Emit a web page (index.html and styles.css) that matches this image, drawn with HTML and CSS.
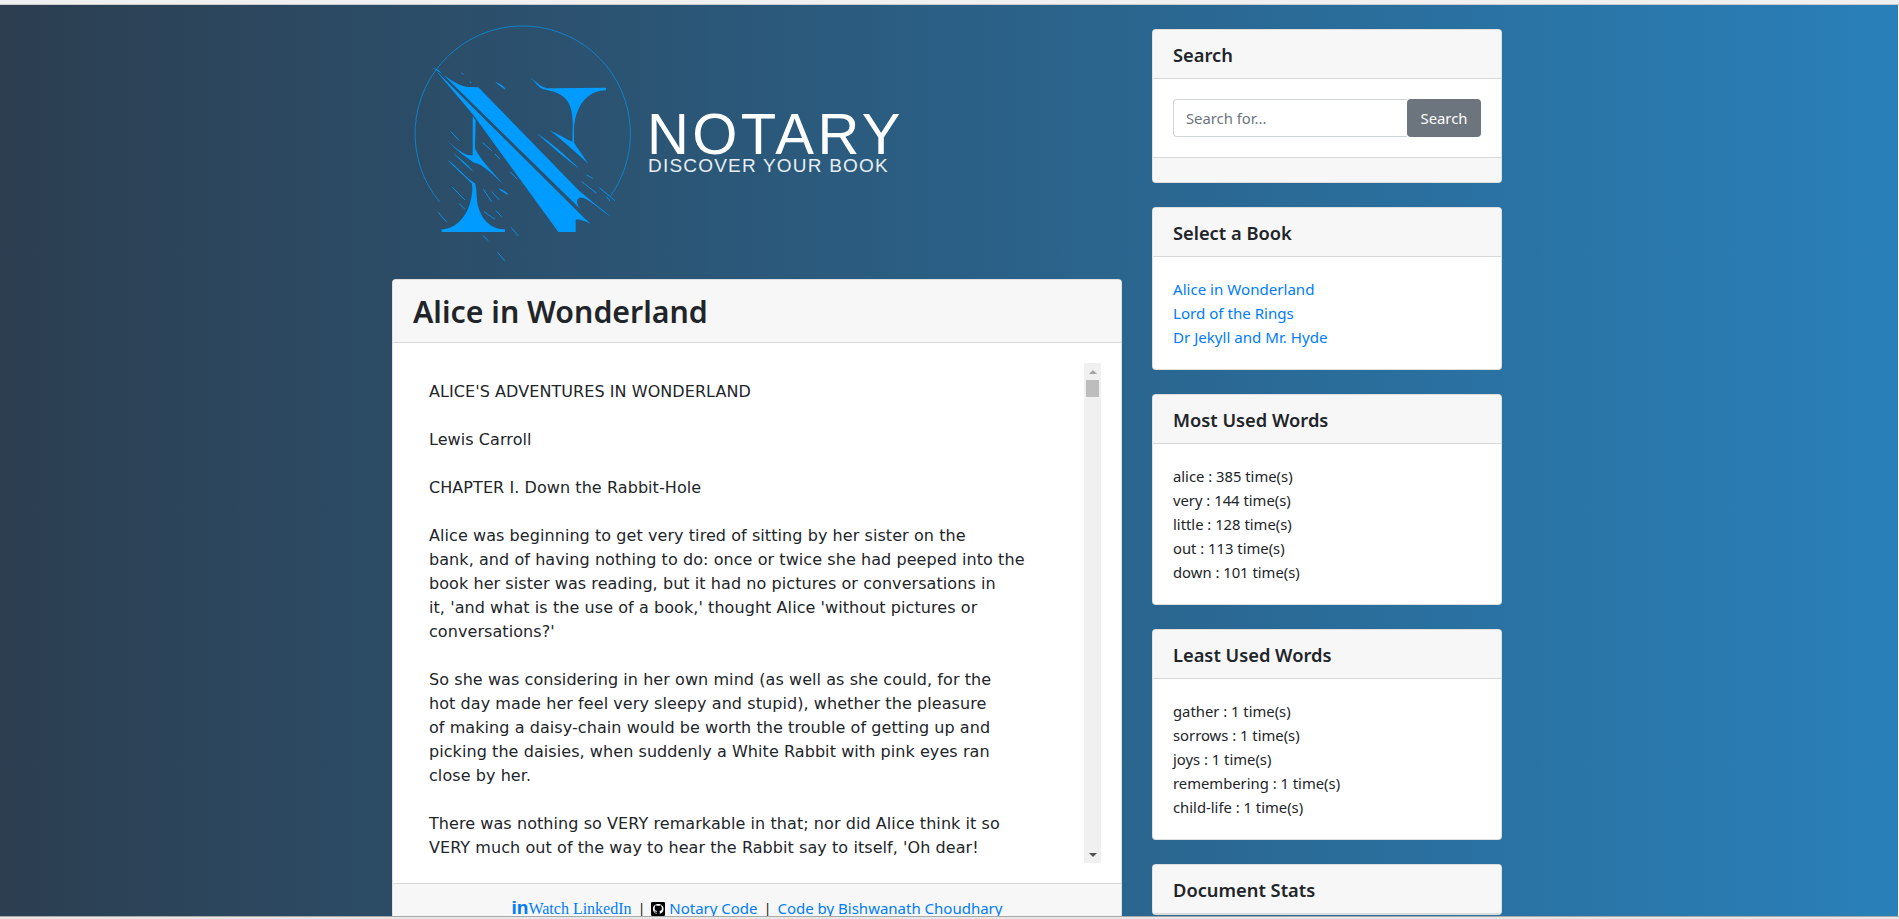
FILE: index.html
```html
<!DOCTYPE html>
<html>
<head>
  <title>Notary</title>
  <link rel="stylesheet" href="styles.css">
</head>
<body>
  <div class="top-strip"></div>

  <div class="page">
    <div class="container">
      <div class="main-col">
        <div class="logo">
          <svg class="logo-mark" viewBox="0 0 720 750" width="240" height="250">
            <path class="logo-ring" d="M88 545 A323 323 0 1 1 600 530"/>
            <path class="logo-fill" d="M66 142 C110 170 140 198 175 201 L205 202 L500 505 C520 525 560 555 605 592 C570 570 530 530 510 533 C498 536 498 550 510 566 L85 150 Z"/>
            <path class="logo-fill" d="M76 150 L525 596 L542 611 C525 605 510 595 497 600 L497 636 L445 636 L190 285 Z"/>
            <path class="logo-fill" d="M360 173 C385 190 395 205 420 205 L588 203 L588 211 C530 212 495 260 492 330 L492 368 L535 431 C510 410 470 370 418 330 C450 345 475 362 487 365 C490 300 490 260 465 235 C450 218 420 212 400 208 C385 203 375 183 360 173 Z"/>
            <path class="logo-fill" d="M380 340 C420 365 470 410 510 448 C470 420 420 375 380 340 Z"/>
            <path class="logo-fill" d="M188 288 L197 302 L195 385 C205 410 240 450 280 492 C245 460 215 430 192 428 C165 410 140 390 115 365 C140 385 165 410 188 405 Z"/>
            <path class="logo-fill" d="M95 628 C130 628 165 600 180 550 C185 530 190 510 185 490 C160 465 130 440 112 418 C140 440 175 480 195 490 C202 510 198 540 205 560 C215 600 245 628 285 628 L285 636 L95 636 Z"/>
            <path class="logo-fill" d="M130 400 C150 415 175 435 190 455 C170 440 150 420 130 400 Z"/>
            <path class="logo-fill" d="M255 185 C270 190 282 198 288 210 C278 202 265 195 255 185 Z"/>
            <path class="logo-fill" d="M265 505 C278 510 290 517 297 525 C285 522 273 514 265 505 Z"/>
            <path class="logo-specks" d="M123 335 L148 362 M127 502 L165 540 M85 577 L110 606 M222 575 L255 598 M245 515 L268 540 M220 508 L245 545 M147 550 L165 568 M258 572 L275 590 M218 368 L245 392 M255 402 L270 418 M303 622 L325 648 M218 646 L235 662 M263 697 L284 722 M300 455 L322 478 M515 485 L560 520 M568 503 L615 542 M530 465 L548 475 M590 530 L600 543 M155 158 L160 164 M180 184 L183 190"/>
          </svg>
          <div class="logo-text">
            <div class="logo-name">NOTARY</div>
            <div class="logo-tag">DISCOVER YOUR BOOK</div>
          </div>
        </div>

        <div class="card">
          <div class="card-header">
            <h1 class="book-title">Alice in Wonderland</h1>
          </div>
          <div class="card-body">
            <div class="book-scroll">
<pre class="book-text">ALICE'S ADVENTURES IN WONDERLAND

Lewis Carroll

CHAPTER I. Down the Rabbit-Hole

Alice was beginning to get very tired of sitting by her sister on the
bank, and of having nothing to do: once or twice she had peeped into the
book her sister was reading, but it had no pictures or conversations in
it, 'and what is the use of a book,' thought Alice 'without pictures or
conversations?'

So she was considering in her own mind (as well as she could, for the
hot day made her feel very sleepy and stupid), whether the pleasure
of making a daisy-chain would be worth the trouble of getting up and
picking the daisies, when suddenly a White Rabbit with pink eyes ran
close by her.

There was nothing so VERY remarkable in that; nor did Alice think it so
VERY much out of the way to hear the Rabbit say to itself, 'Oh dear!</pre>
              <div class="scrollbar">
                <div class="sb-btn"><span class="sb-up"></span></div>
                <div class="sb-track"><div class="sb-thumb"></div></div>
                <div class="sb-btn"><span class="sb-down"></span></div>
              </div>
            </div>
          </div>
          <div class="card-footer main-footer">
            <a class="in-link" href="#"><span class="in-mark">in</span>Watch LinkedIn</a>
            <span class="sep">|</span>
            <svg class="gh-icon" viewBox="0 0 16 16" width="14" height="14">
              <rect width="16" height="16" rx="1.5" fill="#000"/>
              <path fill="#fff" d="M8 2.2C4.8 2.2 2.2 4.8 2.2 8c0 2.6 1.7 4.7 4 5.5.3 0 .4-.1.4-.3v-1c-1.6.3-2-.4-2.1-.8-.1-.2-.4-.8-.7-.9-.2-.1-.5-.4 0-.4.5 0 .8.4.9.6.6 1 1.5.7 1.9.5 0-.4.2-.7.4-.9-1.4-.2-2.9-.7-2.9-3.200 0-.7.3-1.300.7-1.700-.1-.2-.3-.8.1-1.700 0 0 .5-.2 1.800.7.5-.1 1.100-.2 1.600-.2s1.100.1 1.600.2c1.200-.8 1.800-.7 1.800-.7.4.9.1 1.500.1 1.700.4.4.7 1 .7 1.700 0 2.500-1.500 3-2.900 3.200.2.2.4.6.4 1.200v1.700c0 .2.1.3.4.3 2.300-.8 4-2.900 4-5.500 0-3.200-2.600-5.800-5.800-5.800z"/>
            </svg>
            <a class="foot-link" href="#">Notary Code</a>
            <span class="sep">|</span>
            <a class="foot-link" href="#">Code by Bishwanath Choudhary</a>
          </div>
        </div>
      </div>

      <div class="side-col">
        <div class="card">
          <div class="card-header"><h5>Search</h5></div>
          <div class="card-body">
            <div class="search-group">
              <input class="search-input" type="text" placeholder="Search for...">
              <button class="search-btn">Search</button>
            </div>
          </div>
          <div class="card-footer"></div>
        </div>

        <div class="card">
          <div class="card-header"><h5>Select a Book</h5></div>
          <div class="card-body">
            <a class="book-link" href="#">Alice in Wonderland</a>
            <a class="book-link" href="#">Lord of the Rings</a>
            <a class="book-link" href="#">Dr Jekyll and Mr. Hyde</a>
          </div>
        </div>

        <div class="card">
          <div class="card-header"><h5>Most Used Words</h5></div>
          <div class="card-body word-list">
            <div>alice : 385 time(s)</div>
            <div>very : 144 time(s)</div>
            <div>little : 128 time(s)</div>
            <div>out : 113 time(s)</div>
            <div>down : 101 time(s)</div>
          </div>
        </div>

        <div class="card">
          <div class="card-header"><h5>Least Used Words</h5></div>
          <div class="card-body word-list">
            <div>gather : 1 time(s)</div>
            <div>sorrows : 1 time(s)</div>
            <div>joys : 1 time(s)</div>
            <div>remembering : 1 time(s)</div>
            <div>child-life : 1 time(s)</div>
          </div>
        </div>

        <div class="card">
          <div class="card-header"><h5>Document Stats</h5></div>
        </div>
      </div>
    </div>
  </div>

  <div class="bottom-strip"></div>
</body>
</html>
```

FILE: styles.css
```css
html, body {
  height: 100%;
  margin: 0;
  overflow: hidden;
}

body {
  display: flex;
  flex-direction: column;
  background: #fff;
  color: #212529;
  font-family: "Noto Sans", sans-serif;
  font-size: 14.8px;
  line-height: 24px;
}

a {
  color: #007bff;
  text-decoration: none;
}

.top-strip {
  height: 4px;
  background: #f0f0f0;
  border-bottom: 1px solid #ccc;
  flex: none;
}

.bottom-strip {
  height: 2px;
  background: #e6e6e6;
  border-top: 1px solid #a9a9a9;
  flex: none;
}

.page {
  flex: 1;
  min-height: 0;
  overflow: hidden;
  margin-right: 1px;
  padding-right: 4px;
  background: linear-gradient(to right, #2c3e50, #2980b9);
}

.container {
  display: grid;
  grid-template-columns: 730px 350px;
  column-gap: 30px;
  width: 1110px;
  margin: 0 auto;
}

.logo {
  display: flex;
  height: 250px;
  padding: 15px 0 9px 18px;
}

.logo-mark {
  flex: none;
}

.logo-ring {
  fill: none;
  stroke: #0f82c6;
  stroke-width: 3;
}

.logo-fill {
  fill: #009bff;
}

.logo-specks {
  fill: none;
  stroke: #0a8fe6;
  stroke-width: 3;
}

.logo-text {
  margin-left: -3px;
  padding-top: 90px;
  color: #fff;
  font-family: "Liberation Sans", sans-serif;
}

.logo-name {
  font-size: 58px;
  line-height: 48px;
  letter-spacing: 3.400px;
}

.logo-tag {
  margin-left: 1px;
  font-size: 19px;
  line-height: 15px;
  letter-spacing: 1.200px;
  color: #e8eef3;
}

.card {
  margin-bottom: 24px;
  background: #fff;
  border: 1px solid rgba(0, 0, 0, .125);
  border-radius: 4px;
  overflow: hidden;
}

.side-col {
  padding-top: 24px;
}

.card-header {
  padding: 12px 20px;
  background: #f7f7f7;
  border-bottom: 1px solid rgba(0, 0, 0, .125);
}

.card-header h5 {
  margin: 0;
  padding-top: 1px;
  font-size: 18.3px;
  font-weight: 600;
  line-height: 23px;
}

.book-title {
  margin: 0;
  padding-top: 1px;
  font-size: 30.3px;
  font-weight: 600;
  line-height: 37px;
}

.card-body {
  padding: 20px;
}

.card-footer {
  padding: 12px 20px;
  min-height: 25px;
  box-sizing: border-box;
  background: #f7f7f7;
  border-top: 1px solid rgba(0, 0, 0, .125);
}

.main-footer {
  text-align: center;
}

.in-link {
  font-family: "Liberation Serif", serif;
  font-size: 16px;
}

.in-mark {
  font-family: "Liberation Sans", sans-serif;
  font-size: 19px;
  font-weight: 700;
}

.foot-link {
  font-size: 15px;
}

.sep {
  margin: 0 2px;
}

.gh-icon {
  vertical-align: -2px;
}

.book-scroll {
  display: flex;
  height: 500px;
}

.book-text {
  flex: 1;
  margin: 0;
  overflow: hidden;
  padding: 17px 15px 0 16px;
  font-family: "DejaVu Sans", sans-serif;
  font-size: 16px;
  line-height: 24px;
  letter-spacing: .07px;
}

.scrollbar {
  display: flex;
  flex-direction: column;
  flex: none;
  width: 17px;
  background: #f0f0f0;
}

.sb-btn {
  display: flex;
  align-items: center;
  justify-content: center;
  flex: none;
  height: 17px;
}

.sb-up, .sb-down {
  width: 0;
  height: 0;
  border-left: 4px solid transparent;
  border-right: 4px solid transparent;
}

.sb-up {
  border-bottom: 4px solid #a3a3a3;
}

.sb-down {
  border-top: 4px solid #505050;
}

.sb-track {
  flex: 1;
}

.sb-thumb {
  height: 17px;
  margin: 0 2px;
  background: #bdbdbd;
}

.search-group {
  display: flex;
}

.search-input {
  flex: 1;
  min-width: 0;
  height: 38px;
  box-sizing: border-box;
  padding: 6px 12px;
  border: 1px solid #ced4da;
  border-right: none;
  border-radius: 4px 0 0 4px;
  font: inherit;
}

.search-input::placeholder {
  color: #6c757d;
}

.search-btn {
  width: 74px;
  height: 38px;
  padding: 0;
  border: none;
  border-radius: 4px;
  background: #6c757d;
  color: #fff;
  font: inherit;
}

.book-link {
  display: block;
  font-size: 15.1px;
}
```
